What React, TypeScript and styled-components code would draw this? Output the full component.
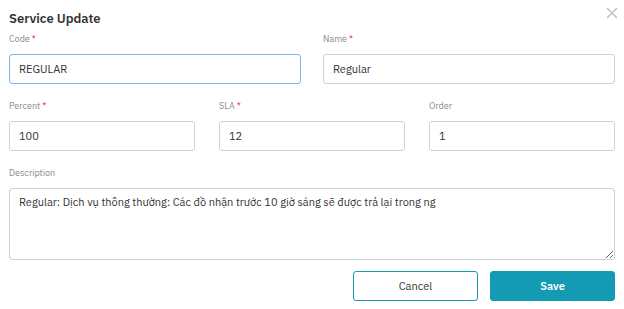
import React from "react";
import styled, { createGlobalStyle } from "styled-components";

const Global = createGlobalStyle`
  html, body { margin: 0; padding: 0; background: #fff; }
  body { font-family: "IBM Plex Sans", Roboto, "Noto Sans", sans-serif; color: #333; }
  * { box-sizing: border-box; }
`;

const Modal = styled.div`
  width: 624px;
  height: 309px;
  padding: 10px 9px 8px 9px;
  position: relative;
  background: #fff;
`;

const Title = styled.h2`
  margin: 0;
  font-size: 13px;
  font-weight: 600;
  color: #333;
  line-height: 17px;
`;

const Close = styled.button`
  position: absolute;
  top: 6px;
  right: 5px;
  width: 14px;
  height: 14px;
  padding: 0;
  border: none;
  background: none;
  cursor: pointer;
`;

const Form = styled.form`
  display: flex;
  flex-direction: column;
  margin-top: 6px;
`;

const Row = styled.div<{ $cols: number; $gap: number }>`
  display: grid;
  grid-template-columns: repeat(${(p) => p.$cols}, 1fr);
  column-gap: ${(p) => p.$gap}px;
  margin-bottom: 16px;
`;

const Field = styled.div`
  display: flex;
  flex-direction: column;
`;

const Label = styled.label`
  font-size: 9px;
  color: #8a8a8a;
  line-height: 12px;
  margin-bottom: 9px;
  span { color: #e0303a; margin-left: 2px; }
`;

const Input = styled.input<{ $focused?: boolean }>`
  height: 30px;
  border: 1px solid ${(p) => (p.$focused ? "#7db7f0" : "#cfd3d8")};
  border-radius: 3px;
  padding: 0 9px;
  font-family: inherit;
  font-size: 11px;
  color: #333;
  outline: none;
`;

const TextArea = styled.textarea`
  height: 72px;
  border: 1px solid #cfd3d8;
  border-radius: 3px;
  padding: 6px 9px;
  font-family: inherit;
  font-size: 11px;
  color: #333;
  outline: none;
  resize: vertical;
`;

const Actions = styled.div`
  display: flex;
  justify-content: flex-end;
  gap: 12px;
  margin-top: -5px;
`;

const Button = styled.button<{ $primary?: boolean }>`
  width: 125px;
  height: 30px;
  border-radius: 3px;
  border: 1px solid #139bb4;
  background: ${(p) => (p.$primary ? "#139bb4" : "#fff")};
  color: ${(p) => (p.$primary ? "#fff" : "#333")};
  font-family: inherit;
  font-size: 11px;
  font-weight: ${(p) => (p.$primary ? 600 : 400)};
  cursor: pointer;
`;

export default function App() {
  return (
    <>
      <Global />
      <Modal>
        <Title>Service Update</Title>
        <Close aria-label="close">
          <svg width="14" height="14" viewBox="0 0 14 14">
            <path d="M2 2 L12 12 M12 2 L2 12" stroke="#c4c4c4" strokeWidth="1.6" />
          </svg>
        </Close>
        <Form>
          <Row $cols={2} $gap={22}>
            <Field>
              <Label>Code<span>*</span></Label>
              <Input $focused defaultValue="REGULAR" />
            </Field>
            <Field>
              <Label>Name<span>*</span></Label>
              <Input defaultValue="Regular" />
            </Field>
          </Row>
          <Row $cols={3} $gap={24}>
            <Field>
              <Label>Percent<span>*</span></Label>
              <Input defaultValue="100" />
            </Field>
            <Field>
              <Label>SLA<span>*</span></Label>
              <Input defaultValue="12" />
            </Field>
            <Field>
              <Label>Order</Label>
              <Input defaultValue="1" />
            </Field>
          </Row>
          <Row $cols={1} $gap={0}>
            <Field>
              <Label>Description</Label>
              <TextArea defaultValue="Regular: Dịch vụ thông thường: Các đồ nhận trước 10 giờ sáng sẽ được trả lại trong ng" />
            </Field>
          </Row>
          <Actions>
            <Button type="button">Cancel</Button>
            <Button type="button" $primary>Save</Button>
          </Actions>
        </Form>
      </Modal>
    </>
  );
}
